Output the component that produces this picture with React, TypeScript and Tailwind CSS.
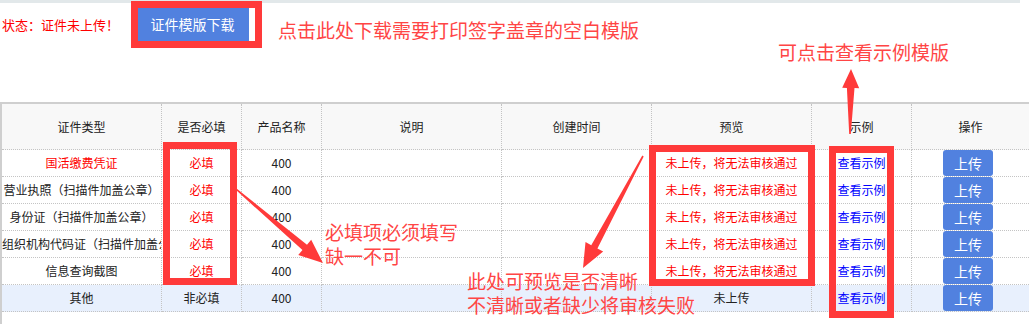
import React from "react";

const rows = [
  { type: "国活缴费凭证", typeRed: true, must: true, preview: false },
  { type: "营业执照（扫描件加盖公章）", must: true, preview: false },
  { type: "身份证（扫描件加盖公章）", must: true, preview: false },
  { type: "组织机构代码证（扫描件加盖公章）", must: true, preview: false },
  { type: "信息查询截图", must: true, preview: false },
  { type: "其他", must: false, preview: true },
];

const headers = ["证件类型", "是否必填", "产品名称", "说明", "创建时间", "预览", "示例", "操作"];

// tapered arrow polygon: thin tail, wider neck, triangular head
function arrowPoints(x1: number, y1: number, x2: number, y2: number, headLen: number, headHalf: number, tail: number, neck: number) {
  const dx = x2 - x1;
  const dy = y2 - y1;
  const len = Math.hypot(dx, dy);
  const ux = dx / len;
  const uy = dy / len;
  const px = -uy;
  const py = ux;
  const bx = x2 - ux * headLen;
  const by = y2 - uy * headLen;
  const pts = [
    [x1 + px * tail, y1 + py * tail],
    [bx + px * neck, by + py * neck],
    [bx + px * headHalf, by + py * headHalf],
    [x2, y2],
    [bx - px * headHalf, by - py * headHalf],
    [bx - px * neck, by - py * neck],
    [x1 - px * tail, y1 - py * tail],
  ];
  return pts.map((p) => p.join(",")).join(" ");
}

const cell = "border-r border-b border-dotted border-[#c4c4c4] whitespace-nowrap overflow-hidden text-center";

export default function App() {
  return (
    <div className="relative w-[1029px] h-[324px] bg-white overflow-hidden font-['Noto_Sans_CJK_SC','Microsoft_YaHei',sans-serif] text-[12px] text-[#222] flex flex-col">
      <div className="h-[3px] w-[1020px] bg-[#e2e8ea] shrink-0" />

      {/* Status bar */}
      <div className="h-[99px] shrink-0 flex items-start pl-[2px]">
        <div className="mt-[5px] flex items-center gap-[17px]">
          <span className="text-[13px] text-[#ff0000] leading-[33px]">状态：证件未上传！</span>
          <button className="w-[113px] h-[33px] bg-[#5181df] text-white text-[14px]">证件模版下载</button>
        </div>
      </div>

      {/* Table */}
      <div className="flex-1 border-l-2 border-[#cfcfcf]">
        <div className="grid grid-cols-[160px_80px_80px_180px_150px_160px_100px_117px] border-t-2 border-[#cfcfcf]">
          {headers.map((h, i) => (
            <div
              key={h}
              className={`h-[46px] leading-[45px] bg-[#f8f8f8] border-b border-dotted border-[#c4c4c4] text-center ${i < 7 ? "border-r" : ""}`}
            >
              {h}
            </div>
          ))}
          {rows.map((r) => {
            const bg = r.preview ? "bg-[#e8f0fd]" : "bg-white";
            return (
              <React.Fragment key={r.type}>
                <div className={`${cell} ${bg} h-[27px] leading-[26px] ${r.typeRed ? "text-[#ff0000]" : ""}`}>{r.type}</div>
                <div className={`${cell} ${bg} h-[27px] leading-[26px] ${r.must ? "text-[#ff0000]" : ""}`}>
                  {r.must ? "必填" : "非必填"}
                </div>
                <div className={`${cell} ${bg} h-[27px] leading-[26px]`}>400</div>
                <div className={`${cell} ${bg} h-[27px]`} />
                <div className={`${cell} ${bg} h-[27px]`} />
                <div className={`${cell} ${bg} h-[27px] leading-[26px] ${r.preview ? "" : "text-[#ff0000]"}`}>
                  {r.preview ? "未上传" : "未上传，将无法审核通过"}
                </div>
                <div className={`${cell} ${bg} h-[27px] leading-[26px] text-[#0000ff]`}>查看示例</div>
                <div className={`border-b border-dotted border-[#c4c4c4] ${bg} h-[27px] flex items-start justify-center pr-[5px]`}>
                  <button className="w-[50px] h-[26px] rounded-[3px] bg-[#5181df] text-white text-[14px] leading-[26px]">上传</button>
                </div>
              </React.Fragment>
            );
          })}
        </div>
      </div>

      {/* Annotation boxes */}
      <div className="absolute left-[131px] top-[1px] w-[131px] h-[47px] border-[7px] border-[#ff3a3a]" />
      <div className="absolute left-[163px] top-[142px] w-[74px] h-[143px] border-[7px] border-[#ff3a3a]" />
      <div className="absolute left-[649px] top-[145px] w-[166px] h-[141px] border-[7px] border-[#ff3a3a]" />
      <div className="absolute left-[829px] top-[146px] w-[65px] h-[172px] border-[7px] border-[#ff3a3a]" />

      {/* Annotation arrows */}
      <svg className="absolute left-0 top-0 pointer-events-none" width="1029" height="324" viewBox="0 0 1029 324">
        <polygon points={arrowPoints(850, 134, 851, 69, 19, 8.5, 0.8, 3.8)} fill="#ff3a3a" />
        <polygon points={arrowPoints(236, 189, 323, 263, 24, 10, 0.8, 3.5)} fill="#ff3a3a" />
        <polygon points={arrowPoints(643, 156, 583, 268, 24, 10, 0.8, 3.5)} fill="#ff3a3a" />
      </svg>

      {/* Annotation texts */}
      <div className="absolute left-[278px] top-[18px] text-[19px] leading-[24px] text-[#ff4545] whitespace-nowrap">
        点击此处下载需要打印签字盖章的空白模版
      </div>
      <div className="absolute left-[778px] top-[40px] text-[19px] leading-[24px] text-[#ff4545] whitespace-nowrap">
        可点击查看示例模版
      </div>
      <div className="absolute left-[325px] top-[220px] text-[19px] leading-[24px] text-[#ff4545] whitespace-nowrap">
        <div>必填项必须填写</div>
        <div>缺一不可</div>
      </div>
      <div className="absolute left-[467px] top-[269px] text-[19px] leading-[24px] text-[#ff4545] whitespace-nowrap">
        <div>此处可预览是否清晰</div>
        <div>不清晰或者缺少将审核失败</div>
      </div>
    </div>
  );
}
